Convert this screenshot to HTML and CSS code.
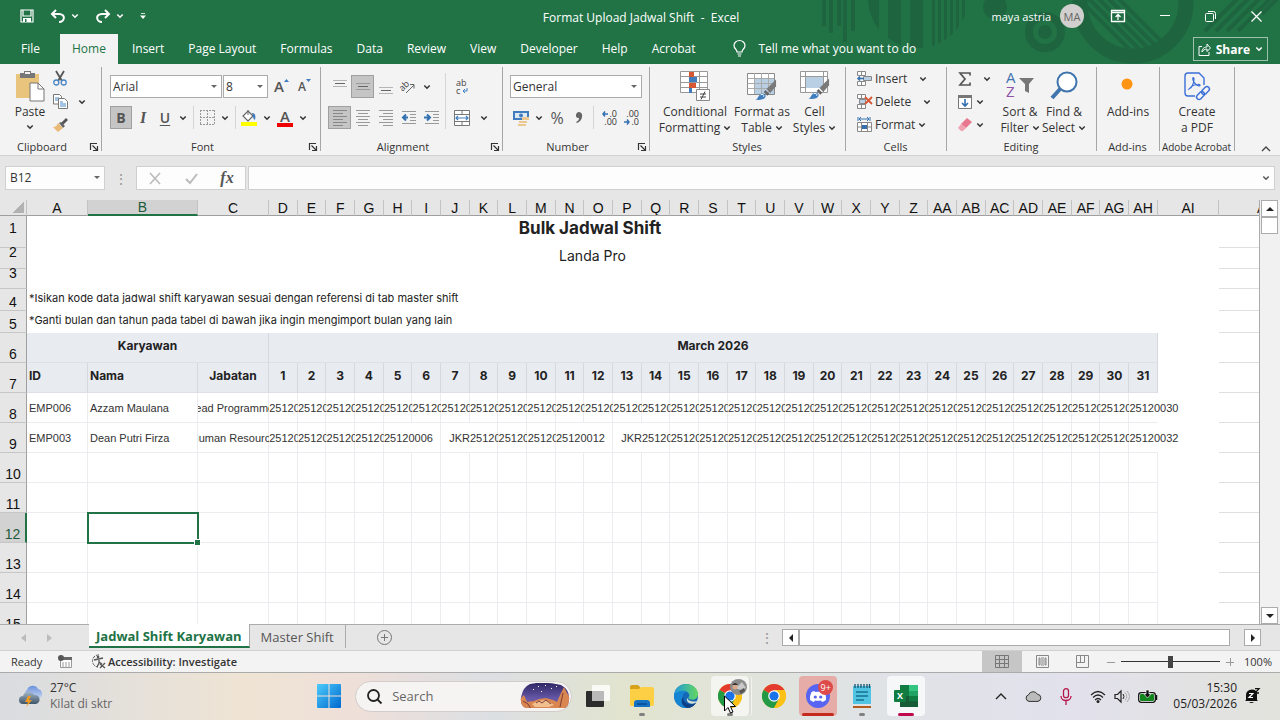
FILE: index.html
```html
<!DOCTYPE html>
<html lang="id">
<head>
    <meta charset="UTF-8">
    <meta name="viewport" content="width=device-width, initial-scale=1.0">
    <title>Format Upload Jadwal Shift - Excel</title>
    <link rel="stylesheet" href="styles.css">
</head>
<body>
    <!-- shared icons -->
    <svg class="defs" aria-hidden="true">
        <symbol id="chev" viewBox="0 0 8 8"><path d="M1.3 2.5 4 5.2 6.7 2.5" fill="none" stroke="currentColor" stroke-width="1.5"/></symbol>
        <symbol id="launch" viewBox="0 0 10 10"><path d="M1.5 8V1.5H8M3.5 3.5 8 8M8.5 4v4.5H4" fill="none" stroke="#333" stroke-width="1.2"/></symbol>
        <symbol id="brush" viewBox="0 0 24 24"><path d="M23 1v7l-6 7-4-4z" fill="#7a7a7a"/><path d="m12 12 4 4-2 2-4-4z" fill="#666"/><path d="M1 22c3 0 3-3 5-5 3-3 7 0 6 2-1 3-6 4-11 3z" fill="#3f7dbf"/><path d="M7 17c2-1 4 0 3 2" fill="none" stroke="#fff"/></symbol>
        <symbol id="chrome" viewBox="0 0 24 24">
            <circle cx="12" cy="12" r="12" fill="#fbc116"/>
            <path d="M12 12 1.6 6A12 12 0 0 1 22.4 6z" fill="#e33b2e"/>
            <path d="M1.6 6A12 12 0 0 0 12 24l5-9-5-3z" fill="#229a45"/>
            <path d="M12 24a12 12 0 0 0 10.4-18H12l5 9z" fill="#fbc116"/>
            <circle cx="12" cy="12" r="5.8" fill="#fff"/><circle cx="12" cy="12" r="4.6" fill="#1a73e8"/>
        </symbol>
    </svg>

    <header class="app-header">
        <svg class="pattern" width="460" height="64" viewBox="820 0 460 64" aria-hidden="true">
            <defs>
                <clipPath id="disc"><circle cx="918" cy="-2" r="50"/></clipPath>
                <clipPath id="inner"><circle cx="1133" cy="3" r="46"/></clipPath>
            </defs>
            <path d="M822 0h4v26h-4zM829 0h4v33h-4zM837 0h4v26h-4zM843 0h4v42h-4zM851 0h4v31h-4z"/>
            <path clip-path="url(#disc)" d="M868 0h11v64h-11zM888 0h13v64h-13zM910 0h13v64h-13zM932 0h3v64h-3zM938 0h3v64h-3zM944 0h3v64h-3zM950 0h3v64h-3zM956 0h3v64h-3zM962 0h3v64h-3z"/>
            <circle cx="995" cy="7" r="12"/>
            <circle cx="1045" cy="32" r="16" class="ring"/><circle cx="1045" cy="32" r="7"/>
            <circle cx="1133" cy="3" r="53" class="ring wide"/>
            <path clip-path="url(#inner)" class="lines" d="m1080-10 70 70M1090-10l70 70M1100-10l70 70M1110-10l70 70M1070-10l70 70"/>
            <path class="lines" d="m1205 31 33-33M1216 31l33-33M1227 31l33-33M1238 31l33-33M1262 14l20-20"/>
        </svg>
        <div class="title-row">
            <div class="quick">
                <button class="plain" aria-label="Save"><svg width="14" height="14" viewBox="0 0 14 14"><path d="M1 1h12v12H1zM3 1v6h8V1" fill="none" stroke="#fff" stroke-width="1.200"/><path d="M3 9h8v4H3z" fill="#fff"/><path d="M5 10h1.500v3H5z" fill="#217346"/></svg></button>
                <button class="plain" aria-label="Undo"><svg width="16" height="14" viewBox="0 0 16 14"><path d="M6 1 2 5l4 4M2 5h7c7 0 6 8 0 8" fill="none" stroke="#fff" stroke-width="2"/></svg><svg class="chev"><use href="#chev"/></svg></button>
                <button class="plain" aria-label="Redo"><svg width="16" height="14" viewBox="0 0 16 14"><path d="m10 1 4 4-4 4M14 5H7C0 5 1 13 7 13" fill="none" stroke="#fff" stroke-width="2"/></svg><svg class="chev"><use href="#chev"/></svg></button>
                <button class="plain" aria-label="Customize"><svg width="6" height="8" viewBox="0 0 6 8"><path d="M1 1.500h4" stroke="#cfe0d6"/><path d="M0 3.500h6L3 7z" fill="#fff"/></svg></button>
            </div>
            <div class="doc-title">Format Upload Jadwal Shift&nbsp; -&nbsp; Excel</div>
            <div class="window-tools">
                <span class="user">maya astria</span>
                <span class="avatar">MA</span>
                <button class="plain" aria-label="Ribbon display"><svg width="14" height="12" viewBox="0 0 14 12"><path d="M.5.500h13v11H.5zM.5 2.500h13M7 10V4.500M4.500 7 7 4.500 9.500 7" fill="none" stroke="#fff" stroke-width="1.300"/></svg></button>
                <button class="plain" aria-label="Minimize"><svg width="10" height="10" viewBox="0 0 10 10"><path d="M0 4.500h10" stroke="#fff"/></svg></button>
                <button class="plain" aria-label="Restore"><svg width="11" height="11" viewBox="0 0 11 11"><rect x=".5" y="2.500" width="8" height="8" rx="1" fill="none" stroke="#fff"/><path d="M3 .5h5.500a2 2 0 0 1 2 2V8" fill="none" stroke="#fff"/></svg></button>
                <button class="plain" aria-label="Close"><svg width="11" height="11" viewBox="0 0 11 11"><path d="m.5.500 10 10m0-10-10 10" stroke="#fff" stroke-width="1.300"/></svg></button>
            </div>
        </div>
        <nav class="tabs">
            <button>File</button>
            <button class="active">Home</button>
            <button>Insert</button>
            <button>Page Layout</button>
            <button>Formulas</button>
            <button>Data</button>
            <button>Review</button>
            <button>View</button>
            <button>Developer</button>
            <button>Help</button>
            <button>Acrobat</button>
            <button class="tell-me"><svg width="13" height="17" viewBox="0 0 13 17"><path d="M4 12c0-3-3-3-3-6.500a5.500 5 0 0 1 11 0C12 9 9 9 9 12zM4.500 14h4M5 16h3" fill="none" stroke="#fff" stroke-width="1.200"/></svg>Tell me what you want to do</button>
            <button class="share"><svg width="13" height="13" viewBox="0 0 13 13"><path d="M4 3.500H1v9h10V9M4 9c0-4 3-5 5-5V1l3.500 4L9 8.500V6C7 6 5 7 4 9z" fill="none" stroke="#fff"/></svg>Share<svg class="chev"><use href="#chev"/></svg></button>
        </nav>
    </header>

    <section class="ribbon">
        <div class="group clipboard">
            <div class="group-body">
                <button class="big"><svg width="30" height="32" viewBox="0 0 30 32"><path d="M1 4h23v24H1z" fill="#e9c47c"/><path d="M5 3h4V1h7v2h4v5H5z" fill="#777"/><path d="M10 2h5v2h-5z" fill="#f3f3f3"/><path d="M15 13h8l6 6v12H15z" fill="#fff" stroke="#777"/><path d="M23 13v6h6" fill="none" stroke="#777"/></svg>Paste<svg class="chev"><use href="#chev"/></svg></button>
                <div class="stack">
                    <button aria-label="Cut"><svg width="14" height="15" viewBox="0 0 14 15"><path d="m3 0 6 10M11 0 5 10" stroke="#555" stroke-width="1.800"/><circle cx="3.300" cy="11.500" r="2.500" fill="none" stroke="#4a86c5" stroke-width="1.300"/><circle cx="10.700" cy="11.500" r="2.500" fill="none" stroke="#4a86c5" stroke-width="1.300"/></svg></button>
                    <button aria-label="Copy"><svg width="15" height="15" viewBox="0 0 15 15"><path d="M.5.500h6l2 2V10h-8z" fill="#fff" stroke="#777"/><path d="M2 4h4M2 6h4" stroke="#4a86c5"/><path d="M5.500 4.500h6l3 3v7h-9z" fill="#fff" stroke="#777"/><path d="M7 8h3M7 10h6M7 12h6" stroke="#4a86c5"/></svg><svg class="chev far"><use href="#chev"/></svg></button>
                    <button aria-label="Format Painter"><svg width="15" height="14" viewBox="0 0 15 14"><path d="m8 5 5-5 2 2-5 5z" fill="#555"/><path d="m6 5 4 5 2-2-4-4z" fill="#666"/><path d="m5 5 5 5-5 4-5-5c2 0 4-1 5-4z" fill="#e9b978"/></svg></button>
                </div>
            </div>
            <div class="group-label">Clipboard</div>
            <button class="launcher" aria-label="Clipboard settings"><svg width="10" height="10"><use href="#launch"/></svg></button>
        </div>

        <div class="group font">
            <div class="rows">
                <div class="row">
                    <span class="combo name"><select aria-label="Font"><option>Arial</option></select></span>
                    <span class="combo size"><select aria-label="Font size"><option>8</option></select></span>
                    <button class="tool grow" aria-label="Increase font size">A<svg width="5" height="3" viewBox="0 0 5 3"><path d="M0 3 2.500 0 5 3z" fill="#3f7dbf"/></svg></button>
                    <button class="tool grow small" aria-label="Decrease font size">A<svg width="5" height="3" viewBox="0 0 5 3"><path d="M0 0h5L2.500 3z" fill="#3f7dbf"/></svg></button>
                </div>
                <div class="row">
                    <button class="tool bold on">B</button>
                    <button class="tool italic">I</button>
                    <button class="tool underline">U</button>
                    <button class="drop" aria-label="Underline style"><svg class="chev"><use href="#chev"/></svg></button>
                    <i class="sep"></i>
                    <button class="tool" aria-label="Borders"><svg width="15" height="15" viewBox="0 0 15 15"><path d="M.5 0v15M7.500 0v15M14.500 0v15M0 .5h15M0 7.500h15M0 14.500h15" stroke="#999" stroke-dasharray="2 1"/></svg></button>
                    <button class="drop" aria-label="Border style"><svg class="chev"><use href="#chev"/></svg></button>
                    <i class="sep"></i>
                    <button class="tool" aria-label="Fill color"><svg width="16" height="17" viewBox="0 0 16 17"><path d="m7 2 5 5-5 5-5-5z" fill="#fff" stroke="#666" stroke-width="1.200"/><path d="M7 6V1" stroke="#666"/><path d="M11 4c3 0 4 2 3 7-2-1-2-3-2-4z" fill="#3f7dbf"/><path d="M0 13h16v4H0z" fill="#ff0"/></svg></button>
                    <button class="drop" aria-label="Fill color list"><svg class="chev"><use href="#chev"/></svg></button>
                    <button class="tool font-color">A</button>
                    <button class="drop" aria-label="Font color list"><svg class="chev"><use href="#chev"/></svg></button>
                </div>
            </div>
            <div class="group-label">Font</div>
            <button class="launcher" aria-label="Font settings"><svg width="10" height="10"><use href="#launch"/></svg></button>
        </div>

        <div class="group alignment">
            <div class="rows">
                <div class="row">
                    <button class="tool" aria-label="Top align"><svg width="14" height="16" viewBox="0 0 14 16"><path d="M0 1.500h14M0 7.500h14" stroke="#b5b5b5"/><path d="M2 4.500h10" stroke="#666"/></svg></button>
                    <button class="tool on" aria-label="Middle align"><svg width="14" height="16" viewBox="0 0 14 16"><path d="M0 4.500h14M0 10.500h14" stroke="#999"/><path d="M2 7.500h10" stroke="#666"/></svg></button>
                    <button class="tool" aria-label="Bottom align"><svg width="14" height="16" viewBox="0 0 14 16"><path d="M0 8.500h14M0 14.500h14" stroke="#b5b5b5"/><path d="M2 11.500h10" stroke="#666"/></svg></button>
                    <button class="tool" aria-label="Orientation"><svg width="15" height="15" viewBox="0 0 15 15"><text x="0" y="11" transform="rotate(-45 3 10)" class="icon-text">ab</text><path d="m5 14 8-8M9 5.500h4v4" fill="none" stroke="#666"/></svg></button>
                    <button class="drop" aria-label="Orientation list"><svg class="chev"><use href="#chev"/></svg></button>
                </div>
                <div class="row">
                    <button class="tool on" aria-label="Align left"><svg width="14" height="16" viewBox="0 0 14 16"><path d="M0 .5h14M0 3.500h10M0 6.500h14M0 9.500h10M0 12.500h14M0 15.500h10" stroke="#888"/></svg></button>
                    <button class="tool" aria-label="Center"><svg width="14" height="16" viewBox="0 0 14 16"><path d="M0 .5h14M2 3.500h10M0 6.500h14M2 9.500h10M0 12.500h14M2 15.500h10" stroke="#999"/></svg></button>
                    <button class="tool" aria-label="Align right"><svg width="14" height="16" viewBox="0 0 14 16"><path d="M0 .5h14M4 3.500h10M0 6.500h14M4 9.500h10M0 12.500h14M4 15.500h10" stroke="#999"/></svg></button>
                    <button class="tool" aria-label="Decrease indent"><svg width="16" height="16" viewBox="0 0 16 16"><path d="M1 1.500h14M9 4.500h6M9 7.500h6M9 10.500h6M1 13.500h14" stroke="#999"/><path d="M7 7.500H2m3-3-3 3 3 3" fill="none" stroke="#3470b0" stroke-width="2"/></svg></button>
                    <button class="tool" aria-label="Increase indent"><svg width="16" height="16" viewBox="0 0 16 16"><path d="M1 1.500h14M9 4.500h6M9 7.500h6M9 10.500h6M1 13.500h14" stroke="#999"/><path d="M0 7.500h5m-2-3 3 3-3 3" fill="none" stroke="#3470b0" stroke-width="2"/></svg></button>
                </div>
            </div>
            <i class="sep tall"></i>
            <div class="rows side">
                <div class="row"><button class="tool" aria-label="Wrap text"><svg width="14" height="16" viewBox="0 0 14 16"><text x="1" y="7" class="icon-text">ab</text><text x="1" y="15" class="icon-text">c</text><path d="M12 9v3H8m2-2-2 2 2 2" fill="none" stroke="#3f7dbf"/></svg></button></div>
                <div class="row">
                    <button class="tool" aria-label="Merge"><svg width="16" height="16" viewBox="0 0 16 16"><path d="M.5.500h15v15H.5zM.5 4.500h15M.5 11.500h15M8 0v4M8 12v4" fill="#fff" stroke="#777"/><path d="M2 8h12M4 6 2 8l2 2M12 6l2 2-2 2" fill="none" stroke="#3f7dbf" stroke-width="1.200"/></svg></button>
                    <button class="drop" aria-label="Merge options"><svg class="chev"><use href="#chev"/></svg></button>
                </div>
            </div>
            <div class="group-label">Alignment</div>
            <button class="launcher" aria-label="Alignment settings"><svg width="10" height="10"><use href="#launch"/></svg></button>
        </div>

        <div class="group number">
            <div class="rows">
                <div class="row"><span class="combo format"><select aria-label="Number format"><option>General</option></select></span></div>
                <div class="row">
                    <button class="tool" aria-label="Currency"><svg width="16" height="16" viewBox="0 0 16 16"><path d="M0 1h16v9H0z" fill="#3f7dbf"/><path d="M2 3h12v5H2z" fill="#dfe9f4"/><circle cx="8" cy="5.500" r="2" fill="#3f7dbf"/><path d="M9 7h7v3H9zM6 11h8v2H6zM5 14h8v2H5z" fill="#edc88e"/></svg></button>
                    <button class="drop" aria-label="Currency list"><svg class="chev"><use href="#chev"/></svg></button>
                    <button class="tool percent">%</button>
                    <button class="tool comma" aria-label="Comma style"><svg width="8" height="12" viewBox="0 0 8 12"><path d="M4 0c5 0 4 9-2 11l-1-1c2-1 3-2 3-4C0 7 0 0 4 0z" fill="#666"/></svg></button>
                    <i class="sep"></i>
                    <button class="tool decimals" aria-label="Increase decimal"><span><svg width="6" height="6" viewBox="0 0 6 6"><path d="M6 3H1m2-2.500L1 3l2 2.500" fill="none" stroke="#3470b0" stroke-width="1.500"/></svg>.0</span><span>.00</span></button>
                    <button class="tool decimals" aria-label="Decrease decimal"><span>.00</span><span><svg width="6" height="6" viewBox="0 0 6 6"><path d="M0 3h5M3 .5 5 3 3 5.500" fill="none" stroke="#3470b0" stroke-width="1.500"/></svg>.0</span></button>
                </div>
            </div>
            <div class="group-label">Number</div>
            <button class="launcher" aria-label="Number settings"><svg width="10" height="10"><use href="#launch"/></svg></button>
        </div>

        <div class="group styles">
            <div class="group-body">
                <button class="big conditional"><svg width="30" height="32" viewBox="0 0 30 32"><path d="M1 2h26v21H1z" fill="#fff"/><path d="M.5 1.500h27v21H.5zM.5 6.500h27M.5 12.500h27M.5 17.500h27M9.500 1v22M19.500 1v22" fill="none" stroke="#999"/><path d="M9 2h5v5H9zM9 13h7v5H9z" fill="#d65532"/><path d="M9 7h8v5H9zM9 18h3v5H9z" fill="#3f7dbf"/><path d="M16.500 19.500h13v11h-13z" fill="#fff" stroke="#888"/><path d="M20 24h6M20 27h6M25 21.500l-4 8" stroke="#444"/></svg><span>Conditional</span><span>Formatting <svg class="chev"><use href="#chev"/></svg></span></button>
                <button class="big format-table"><svg width="30" height="32" viewBox="0 0 30 32"><path d="M.5 3.500h27v21H.5z" fill="#fff" stroke="#888"/><path d="M7 9h20v15H7z" fill="#b9cfe3"/><path d="M.5 8.500h27M.5 13.500h27M.5 18.500h27M7.500 3v21M14.500 3v21M21.500 3v21" stroke="#aaa"/><use href="#brush" x="7" y="8" width="23" height="24"/></svg><span>Format as</span><span>Table <svg class="chev"><use href="#chev"/></svg></span></button>
                <button class="big cell-styles"><svg width="30" height="32" viewBox="0 0 30 32"><path d="M.5 1.500h27v21H.5zM.5 6.500h27M.5 17.500h27M5.500 1v22M23.500 1v22" fill="#fff" stroke="#999"/><path d="M6 7h17v11H6z" fill="#b9cfe3"/><use href="#brush" x="7" y="7" width="23" height="24"/></svg><span>Cell</span><span>Styles <svg class="chev"><use href="#chev"/></svg></span></button>
            </div>
            <div class="group-label">Styles</div>
        </div>

        <div class="group cells">
            <div class="stack">
                <button class="split"><svg width="15" height="15" viewBox="0 0 15 15"><path d="M.5.500h8v4h-8zM4.500 0v4M.5 10.500h8v4h-8zM4.500 10v5" fill="#fff" stroke="#888"/><path d="M6.500 5.500h8v4h-8z" fill="#b9cfe3" stroke="#888"/><path d="M7 7.500H1m2-2-2 2 2 2" fill="none" stroke="#3470b0" stroke-width="1.500"/></svg>Insert<svg class="chev"><use href="#chev"/></svg></button>
                <button class="split"><svg width="15" height="15" viewBox="0 0 15 15"><path d="M.5.500h8v4h-8zM4.500 0v4M.5 10.500h8v4h-8zM4.500 10v5" fill="#fff" stroke="#888"/><path d="M2.500 5.500h6v4h-6z" fill="#b9cfe3" stroke="#888"/><path d="m8 3 7 7m0-7-7 7" stroke="#d65532" stroke-width="1.800"/></svg>Delete<svg class="chev"><use href="#chev"/></svg></button>
                <button><svg width="15" height="15" viewBox="0 0 15 15"><path d="M1 0v4M13 0v4M2 2h10M4 0 2 2l2 2M10 0l2 2-2 2" fill="none" stroke="#3470b0"/><path d="M.5 5.500h14v9H.5zM4.500 5v10M10.500 5v10M0 10h15" fill="#fff" stroke="#888"/><path d="M5 8h5v4H5z" fill="#3470b0"/></svg>Format<svg class="chev"><use href="#chev"/></svg></button>
            </div>
            <div class="group-label">Cells</div>
        </div>

        <div class="group editing">
            <div class="stack">
                <button class="split" aria-label="AutoSum"><svg width="16" height="14" viewBox="0 0 16 14"><path d="M13 3.500V1H3l5 6-5 6h10v-2.500" fill="none" stroke="#555" stroke-width="1.700"/></svg><svg class="chev"><use href="#chev"/></svg></button>
                <button aria-label="Fill"><svg width="16" height="16" viewBox="0 0 16 16"><path d="M1.500 1.500h13v13h-13z" fill="#fff" stroke="#777"/><path d="M1 1h14v3H1z" fill="#777"/><path d="M8 5v7M5 9l3 3 3-3" fill="none" stroke="#3470b0" stroke-width="1.600"/></svg><svg class="chev"><use href="#chev"/></svg></button>
                <button aria-label="Clear"><svg width="16" height="14" viewBox="0 0 16 14"><path d="m10 0 5 4-6 6-5-4z" fill="#e8788e"/><path d="m4 6 5 4-3 3H4L1 10z" fill="#efa3b1"/></svg><svg class="chev"><use href="#chev"/></svg></button>
            </div>
            <button class="big find"><svg width="30" height="32" viewBox="0 0 30 32"><text x="1" y="13" class="az a">A</text><text x="1" y="27" class="az z">Z</text><path d="M14 8h15l-5 6v9l-4-2v-7z" fill="#777"/></svg><span>Sort &amp;</span><span>Filter <svg class="chev"><use href="#chev"/></svg></span></button>
            <button class="big find"><svg width="28" height="32" viewBox="0 0 28 32"><path d="m2 28 9-10" stroke="#3f74ad" stroke-width="4"/><circle cx="17" cy="12" r="9.500" fill="#fff" stroke="#3f74ad" stroke-width="2"/></svg><span>Find &amp;</span><span>Select <svg class="chev"><use href="#chev"/></svg></span></button>
            <div class="group-label">Editing</div>
        </div>

        <div class="group addins">
            <button class="big"><svg width="30" height="32" viewBox="0 0 30 32"><circle cx="14" cy="14" r="5.500" fill="#ff9412"/></svg><span>Add-ins</span></button>
            <div class="group-label">Add-ins</div>
        </div>

        <div class="group acrobat">
            <button class="big"><svg width="28" height="32" viewBox="0 0 28 32"><path d="M12 26H5a3 3 0 0 1-3-3V6a3 3 0 0 1 3-3h11l5 5v7" fill="none" stroke="#3b6fd8" stroke-width="1.400"/><path d="M6 19c3-1 5-6 5-10 0-2-2-2-1 1 1 3 3 5 6 6 2 0 1-2-1-1.500-4 0-7 2-9 4.500z" fill="none" stroke="#3b6fd8" stroke-width="1.200"/><g fill="none" stroke="#3b6fd8" stroke-width="1.400"><rect x="13" y="23" width="9" height="5" rx="2.500" transform="rotate(-45 17.500 25.500)"/><rect x="18" y="18" width="9" height="5" rx="2.500" transform="rotate(-45 22.500 20.500)"/></g></svg><span>Create</span><span>a PDF</span></button>
            <div class="group-label">Adobe Acrobat</div>
        </div>
        <button class="collapse" aria-label="Collapse ribbon"><svg width="10" height="6" viewBox="0 0 10 6"><path d="m1 5 4-4 4 4" fill="none" stroke="#444" stroke-width="1.400"/></svg></button>
    </section>

    <div class="formula-bar">
        <span class="combo name-box"><input type="text" value="B12" aria-label="Name Box"></span>
        <span class="dots">⋮</span>
        <div class="formula-tools">
            <button aria-label="Cancel"><svg width="12" height="11" viewBox="0 0 12 11"><path d="m1 0 10 11M11 0 1 11" stroke="#bbb" stroke-width="1.600"/></svg></button>
            <button aria-label="Enter"><svg width="13" height="11" viewBox="0 0 13 11"><path d="m1 6 4 4 7-9" fill="none" stroke="#bbb" stroke-width="2"/></svg></button>
            <button class="fx">fx</button>
        </div>
        <span class="formula-input"><input type="text" aria-label="Formula Bar"><svg class="chev"><use href="#chev"/></svg></span>
    </div>

    <main class="workspace">
        <div class="sheet">
            <table class="grid">
                <colgroup id="cols"></colgroup>
                <thead><tr id="letters"></tr></thead>
                <tbody id="rows"></tbody>
            </table>
        </div>
        <div class="v-scroll">
            <button aria-label="Scroll up"><svg width="8" height="4" viewBox="0 0 8 4"><path d="m0 4 4-4 4 4z" fill="#222"/></svg></button>
            <div class="thumb"></div>
            <button aria-label="Scroll down"><svg width="8" height="4" viewBox="0 0 8 4"><path d="m0 0 4 4 4-4z" fill="#222"/></svg></button>
        </div>
    </main>

    <div class="sheet-tabs">
        <div class="sheet-nav">
            <button aria-label="Previous sheet"><svg width="5" height="8" viewBox="0 0 5 8"><path d="M5 0v8L0 4z" fill="#bbb"/></svg></button>
            <button aria-label="Next sheet"><svg width="5" height="8" viewBox="0 0 5 8"><path d="M0 0v8l5-4z" fill="#bbb"/></svg></button>
        </div>
        <button class="sheet-tab active">Jadwal Shift Karyawan</button>
        <button class="sheet-tab">Master Shift</button>
        <button class="add-sheet" aria-label="New sheet"><svg width="15" height="15" viewBox="0 0 15 15"><path d="M7.500 4v7M4 7.500h7" stroke="#777"/><circle cx="7.500" cy="7.500" r="7" fill="none" stroke="#777"/></svg></button>
        <div class="h-scroll">
            <span class="dots">⋮</span>
            <button aria-label="Scroll left"><svg width="4" height="8" viewBox="0 0 4 8"><path d="M4 0v8L0 4z" fill="#222"/></svg></button>
            <div class="thumb"></div>
            <button aria-label="Scroll right"><svg width="4" height="8" viewBox="0 0 4 8"><path d="M0 0v8l4-4z" fill="#222"/></svg></button>
        </div>
    </div>

    <footer class="status-bar">
        <span class="ready">Ready</span>
        <svg width="14" height="14" viewBox="0 0 14 14"><path d="M2.500 4.500h11v8h-11zM5 7v5M8 7v5M11 7v5" fill="#fff" stroke="#999"/><path d="M6 2h8v3H4z" fill="#666"/><circle cx="3" cy="3" r="3" fill="#555"/></svg>
        <button class="accessibility"><svg width="15" height="15" viewBox="0 0 15 15"><path d="M8 1a6 6 0 1 0-1 12" fill="none" stroke="#555" stroke-dasharray="3 1"/><path d="m3 6 9-2M8 5v4l-2 4M8 8l3 2m-2 0 5 4m0-5-5 5" fill="none" stroke="#555" stroke-width="1.300"/><circle cx="7" cy="3" r="1.300" fill="#555"/></svg>Accessibility: Investigate</button>
        <div class="views">
            <button class="on" aria-label="Normal view"><svg width="14" height="13" viewBox="0 0 14 13"><path d="M.5.500h13v12H.5zM0 4.500h14M0 8.500h14M4.500 0v13M9.500 0v13" fill="none" stroke="#777"/></svg></button>
            <button aria-label="Page layout view"><svg width="13" height="13" viewBox="0 0 13 13"><path d="M.5.500h12v12H.5z" fill="none" stroke="#888"/><path d="M3 3h1v7H3zM9 3h1v7H9z" fill="none" stroke="#888"/><path d="M5 2h3v9H5z" fill="#bbb"/></svg></button>
            <button aria-label="Page break view"><svg width="13" height="13" viewBox="0 0 13 13"><path d="M.5.500h12v12H.5zM4.500 0v7.500M0 7.500h8.500V0" fill="none" stroke="#888"/></svg></button>
        </div>
        <button class="zoom-step" aria-label="Zoom out"><svg width="8" height="8" viewBox="0 0 8 8"><path d="M0 4.500h8" stroke="#999"/></svg></button>
        <input class="zoom" type="range" min="10" max="190" value="100" aria-label="Zoom">
        <button class="zoom-step" aria-label="Zoom in"><svg width="8" height="8" viewBox="0 0 8 8"><path d="M0 4.500h8M4.500 0v8" stroke="#999"/></svg></button>
        <span class="zoom-value">100%</span>
    </footer>

    <div class="taskbar">
        <button class="weather">
            <svg width="26" height="24" viewBox="0 0 26 24"><defs><linearGradient id="cl" x2="0" y2="1"><stop stop-color="#6b92dc"/><stop offset="1" stop-color="#c3d3f3"/></linearGradient><linearGradient id="cd" x2="0" y2="1"><stop stop-color="#a3b6c6"/><stop offset="1" stop-color="#3f5569"/></linearGradient></defs><path d="M9 13a4 4 0 0 1 0-7 6 6 0 0 1 11-1 5 5 0 0 1 2 9z" fill="url(#cl)"/><path d="M5 20a4 4 0 0 1 0-8 6 6 0 0 1 11-1 4.500 4.500 0 0 1 2 9z" fill="url(#cd)"/><path d="m10 12-3 6h3l-2 5 6-7h-3l2-4z" fill="#f39a1f"/></svg>
            <span><span class="temp">27°C</span><span class="sky">Kilat di sktr</span></span>
        </button>
        <div class="apps">
            <button class="app" aria-label="Start"><svg width="24" height="24" viewBox="0 0 24 24"><defs><linearGradient id="win" x2="1" y2="1"><stop stop-color="#4ccbfb"/><stop offset="1" stop-color="#0068cf"/></linearGradient></defs><path d="M0 1q0-1 1-1h10.500v11.500H0zM12.500 0H23q1 0 1 1v10.500H12.500zM0 12.500h11.500V24H1q-1 0-1-1zM12.500 12.500H24V23q0 1-1 1H12.500z" fill="url(#win)"/></svg></button>
            <label class="search">
                <svg width="15" height="15" viewBox="0 0 15 15"><circle cx="6.500" cy="6.500" r="5.500" fill="none" stroke="#222" stroke-width="1.800"/><path d="m10.500 10.500 4 4" stroke="#222" stroke-width="1.800"/></svg>
                <input type="text" placeholder="Search">
                <svg width="50" height="26" viewBox="0 0 50 26"><defs><linearGradient id="sky" x2="0" y2="1"><stop stop-color="#302765"/><stop offset=".6" stop-color="#6658a8"/><stop offset="1" stop-color="#a4697c"/></linearGradient><clipPath id="scene"><path d="M10 1q15-3 31 1 9 5 8 15-1 8-5 8H6q-6-2-5-11Q3 4 10 1z"/></clipPath></defs><g clip-path="url(#scene)"><path d="M0 0h50v26H0z" fill="url(#sky)"/><path d="M0 16l4-4 3 7 7-1 5-2 7-1 7 2 4 2 3-7 4-8 3 6 3 4v12H0z" fill="#d98650"/><path d="m12 21 6-3 8-1 8 5-5 2H15z" fill="#f2c08e"/><path d="m16 20 3-2 3 2 4-3 5 4M3 18l5 3 3 5M43 10l-3 14" fill="none" stroke="#7c3f3a"/><path d="M13 6h1v1h-1zM18 3h1v1h-1zM25 2h1v1h-1zM31 5h1v1h-1zM36 3h1v1h-1zM21 8h1v1h-1z" fill="#fff"/></g></svg>
            </label>
            <button class="app" aria-label="Task view"><svg width="24" height="24" viewBox="0 0 24 24"><rect x="0" y="7" width="18" height="16" rx="1" fill="#2c2c2c"/><rect x="6" y="1" width="18" height="16" rx="1" fill="#fff" opacity=".8"/><path d="M6 7h12v10H6z" fill="#b9b9b9"/></svg></button>
            <button class="app running" aria-label="File Explorer"><svg width="24" height="22" viewBox="0 0 24 22"><path d="M0 2q0-2 2-2h6l2 2v4H0z" fill="#d9a21b"/><path d="M0 4h9l2-2h11q2 0 2 2v15q0 2-2 2H0z" fill="#fccf45"/><path d="M4 22v-4q0-3 3-3h10q3 0 3 3v4z" fill="#1673c4"/><path d="M7 19h10" stroke="#0c4a8f" stroke-width="1.500"/></svg></button>
            <button class="app" aria-label="Edge"><svg width="24" height="24" viewBox="0 0 24 24"><defs><linearGradient id="eg" x2="1"><stop stop-color="#2098df"/><stop offset="1" stop-color="#64d85c"/></linearGradient></defs><circle cx="12" cy="12" r="12" fill="#1466b7"/><path d="M0 11C1 4 6 0 12 0c7 0 12 5 12 10 0 5-5 7-9 5-2-1 1-2 0-5-2-4-10-4-15 1z" fill="url(#eg)"/><path d="M0 11c5-5 11-5 13-3-3 0-5 3-4 7 1 5 6 7 13 4-3 4-7 5-11 5C4 23 0 18 0 11z" fill="#1585d3"/><path d="M9 13c0 6 6 9 13 6-2 3-5 5-9 5-5-2-7-7-4-11z" fill="#0c3f83"/><path d="M13 14c2 4 7 4 10 3-1 2-2 2-2 2-5 2-9-1-8-5z" fill="#dde2d6"/></svg></button>
            <button class="app running open" aria-label="Chrome, profile">
                <svg width="24" height="24"><use href="#chrome"/></svg>
                <svg class="profile" width="17" height="16" viewBox="0 0 17 16"><ellipse cx="8.500" cy="8" rx="8.500" ry="8" fill="#8c8c8c"/><path d="M3 4l5 3 4-4 4 6-5 2-6-2z" fill="#c9c9c9"/><circle cx="5" cy="8" r="2.500" fill="#d9a98a"/><path d="M2 6q3-4 6 0z" fill="#333"/><path d="m9 12 5-3 1 3-4 3z" fill="#555"/></svg>
                <svg class="cursor" width="12" height="19" viewBox="0 0 12 19"><path d="M.5 1v15l3.500-3.500 2.500 5.500 2.500-1-2.500-5.500h5z" fill="#fff" stroke="#000"/></svg>
            </button>
            <button class="app" aria-label="Chrome"><svg width="24" height="24"><use href="#chrome"/></svg></button>
            <button class="app alert" aria-label="Discord">
                <svg width="24" height="24" viewBox="0 0 24 24"><circle cx="12" cy="12" r="12" fill="#5865f2"/><path d="M8.500 7q-2 .3-3 1Q3.500 12 4 16q2 1.600 4 2l1-1.500q3 .7 6 0L16 18q2-.4 4-2 .5-4-1.500-8-1-.7-3-1l-.6 1q-3-.5-5.800 0z" fill="#fff"/><circle cx="9.300" cy="13" r="1.600" fill="#5865f2"/><circle cx="14.700" cy="13" r="1.600" fill="#5865f2"/></svg>
                <span class="badge">9+</span>
            </button>
            <button class="app running" aria-label="Notepad"><svg width="20" height="24" viewBox="0 0 20 24"><path d="M1 2h18v18H1z" fill="#52c4e3"/><path d="M3 0v4M6 0v4M9 0v4M12 0v4M15 0v4M17.500 0v4" stroke="#15536b" stroke-width="1.300"/><path d="M4 8h12M4 12h12M4 16h8" stroke="#14718f" stroke-width="1.300"/><path d="M1 22h18v2H1z" fill="#b35a1d"/></svg></button>
            <button class="app current" aria-label="Excel"><svg width="24" height="22" viewBox="0 0 24 22"><path d="M6 0h17q1 0 1 1v20q0 1-1 1H6z" fill="#21a366"/><path d="M6 0h9v6H6zM6 6h9v5H6z" fill="#107c41"/><path d="M15 0h8q1 0 1 1v5h-9z" fill="#33c481"/><path d="M15 11h9v5h-9z" fill="#107c41"/><path d="M6 11h9v5H6zM6 16h18v6H6z" fill="#185c37"/><rect y="5" width="12" height="12" rx="1" fill="#107c41"/><text x="6" y="14" text-anchor="middle" class="x">X</text></svg></button>
        </div>
        <div class="tray">
            <button aria-label="Hidden icons"><svg width="12" height="8" viewBox="0 0 12 8"><path d="m1 7 5-5 5 5" fill="none" stroke="#222" stroke-width="1.400"/></svg></button>
            <button aria-label="OneDrive"><svg width="17" height="12" viewBox="0 0 17 12"><path d="M4 11.400a3.400 3.400 0 0 1-.5-6.600 5 5 0 0 1 9-.5 3.600 3.600 0 0 1 .5 7.100z" fill="#bbb" stroke="#333"/></svg></button>
            <button aria-label="Microphone"><svg width="12" height="17" viewBox="0 0 12 17"><rect x="3.500" y=".7" width="5" height="9" rx="2.500" fill="none" stroke="#b5174b" stroke-width="1.300"/><path d="M1 8c0 6 10 6 10 0M6 12.500V17" fill="none" stroke="#b5174b" stroke-width="1.300"/></svg></button>
            <div class="net">
                <svg width="16" height="13" viewBox="0 0 16 13"><path d="M1 5q7-7 14 0M3 7.500q5-5 10 0M5 10q3-3 6 0" fill="none" stroke="#222" stroke-width="1.200"/><circle cx="8" cy="11.500" r="1.500" fill="#222"/></svg>
                <svg width="16" height="13" viewBox="0 0 16 13"><path d="M1 4.500h2.500L7 1v11L3.500 8.500H1z" fill="none" stroke="#222" stroke-width="1.200"/><path d="M9 4q2 2.500 0 5" fill="none" stroke="#222"/><path d="M11 2.500q3.500 4 0 8M13 1q5 5.500 0 11" fill="none" stroke="#aaa"/></svg>
                <svg width="20" height="13" viewBox="0 0 20 13"><rect x=".7" y="2.700" width="16.600" height="9.600" rx="2.500" fill="#fff" stroke="#111" stroke-width="1.300"/><rect x="2" y="4" width="14" height="7" rx="1" fill="#12861c"/><path d="M18.500 5v5" stroke="#111" stroke-width="1.500"/><path d="M8 0h3v4h2L9.500 8 6 4h2z" fill="#111" stroke="#fff" stroke-width=".6"/></svg>
            </div>
            <div class="clock"><span>15:30</span><span>05/03/2026</span></div>
            <button aria-label="Notifications"><svg width="15" height="16" viewBox="0 0 15 16"><path d="M1 12V7q0-5 6-5.500 5 0 5 5V12l1 1H0zM4 14h5q-2.500 2-5 0z" fill="#111"/><path d="M4 5.500h4l-4 4h4" fill="none" stroke="#fff" stroke-width="1.200"/><path d="M10 .7h4L10 5h4" fill="none" stroke="#111" stroke-width="1.300"/></svg></button>
        </div>
    </div>

    <script src="script.js"></script>
</body>
</html>
```
FILE: styles.css
```css
* {
    box-sizing: border-box;
}

body {
    margin: 0;
    height: 100vh;
    display: flex;
    flex-direction: column;
    overflow: hidden;
    background: #e6e6e6;
    color: #333;
    font-family: "Open Sans", "Noto Sans", sans-serif;
    font-size: 12px;
}

button, input, select {
    font: inherit;
    color: inherit;
    margin: 0;
    padding: 0;
    border: none;
    background: none;
    border-radius: 0;
    outline: none;
}

svg {
    display: block;
    flex: none;
    overflow: visible;
}

.defs {
    position: absolute;
    width: 0;
    height: 0;
}

.chev {
    width: 8px;
    height: 8px;
}

/* title bar and ribbon tabs */
.app-header {
    position: relative;
    background: #217346;
    color: #fff;
}

.pattern {
    position: absolute;
    right: 0;
    top: 0;
    overflow: hidden;
    fill: #1e653f;
}

.pattern .ring {
    fill: none;
    stroke: #1e653f;
    stroke-width: 8;
}

.pattern .wide {
    stroke-width: 15;
}

.pattern .lines {
    fill: none;
    stroke: #1e653f;
    stroke-width: 4;
}

.title-row {
    position: relative;
    display: flex;
    align-items: center;
    height: 34px;
}

.quick, .window-tools {
    flex: 1;
    display: flex;
    align-items: center;
    padding-bottom: 2px;
}

.quick {
    gap: 16px;
    padding-left: 20px;
}

.quick .plain, .window-tools .plain {
    display: flex;
    align-items: center;
    gap: 5px;
}

.window-tools {
    justify-content: flex-end;
    padding-right: 18px;
}

.window-tools .plain {
    margin-left: 35px;
}

.user {
    font-size: 11px;
}

.avatar {
    display: flex;
    align-items: center;
    justify-content: center;
    width: 24px;
    height: 24px;
    margin-left: 9px;
    margin-right: -8px;
    border-radius: 50%;
    background: #d2d0ce;
    color: #666;
    font-size: 11px;
}

.tabs {
    position: relative;
    display: flex;
    height: 30px;
    padding-left: 9px;
}

.tabs button {
    padding: 0 12px;
    padding-bottom: 1px;
}

.tabs .active {
    margin: 0 2px 0 8px;
    background: #f3f3f3;
    color: #217346;
}

.tabs .tell-me, .tabs .share {
    display: flex;
    align-items: center;
}

.tabs .tell-me {
    gap: 12px;
    margin-left: 14px;
}

.tabs .share {
    gap: 5px;
    margin: 3px 12px 3px auto;
    padding: 0 4px;
    border: 1px solid #9fc2ae;
    font-weight: 700;
}

/* ribbon */
.ribbon {
    display: flex;
    height: 92px;
    background: #f3f3f3;
    border-bottom: 1px solid #d2d2d2;
    font-size: 12px;
}

.group {
    position: relative;
    display: flex;
    align-items: flex-start;
    flex: none;
    padding: 0 8px 24px;
}

.group::after {
    content: "";
    position: absolute;
    right: 0;
    top: 3px;
    bottom: 4px;
    width: 1px;
    background: #a6a6a6;
}

.clipboard { width: 102px; }
.font { width: 219px; }
.alignment { width: 182px; }
.number { width: 147px; }
.styles { width: 196px; }
.cells { width: 101px; }
.editing { width: 150px; }
.addins { width: 63px; }
.acrobat { width: 75px; }

.alignment, .number {
    padding-left: 7px;
}

.addins, .acrobat {
    padding-left: 0;
    padding-right: 0;
}

.group-label {
    position: absolute;
    left: 0;
    right: 0;
    bottom: 1px;
    padding-right: 18px;
    text-align: center;
    font-size: 11px;
    line-height: 14px;
    white-space: nowrap;
}

.styles .group-label, .cells .group-label, .editing .group-label,
.addins .group-label, .acrobat .group-label {
    padding-right: 2px;
}

.acrobat .group-label {
    font-size: 10px;
}

.launcher {
    position: absolute;
    right: 3px;
    bottom: 3px;
}

.group-body {
    display: flex;
}

.big {
    display: flex;
    flex-direction: column;
    align-items: center;
    padding-top: 6px;
    line-height: 16px;
    white-space: nowrap;
}

.big > svg:first-child {
    margin-bottom: 2px;
}

.big span {
    display: flex;
    align-items: center;
    gap: 3px;
}

.clipboard .big {
    width: 44px;
}

.clipboard .big .chev {
    margin-top: 3px;
}

.conditional { width: 74px; }
.format-table { width: 60px; }
.cell-styles { width: 45px; }
.find { width: 44px; }
.addins .big { width: 62px; }
.acrobat .big { width: 74px; }

.stack {
    display: flex;
    flex-direction: column;
    padding-top: 3px;
}

.stack button {
    display: flex;
    align-items: center;
    gap: 3px;
    height: 23px;
}

.clipboard .stack {
    padding-left: 1px;
}

.stack .far {
    margin-left: 7px;
}

.stack .split .chev {
    margin-left: 9px;
}

.cells .stack {
    padding-left: 3px;
}

.editing .stack {
    padding-left: 2px;
    width: 43px;
}

.editing .split .chev {
    margin-left: 7px;
}

.rows {
    display: flex;
    flex-direction: column;
    gap: 8px;
    padding-top: 11px;
}

.row {
    display: flex;
    align-items: center;
    height: 23px;
}

.combo {
    position: relative;
    display: block;
    height: 23px;
    background: #fff;
    border: 1px solid #ababab;
}

.combo::after {
    content: "";
    position: absolute;
    right: 4px;
    top: 9px;
    border: 3px solid transparent;
    border-top-color: #666;
}

.combo select, .combo input {
    appearance: none;
    display: block;
    width: 100%;
    height: 21px;
    line-height: 20px;
    padding-left: 2px;
}

.combo.name {
    width: 112px;
    margin-right: 1px;
}

.combo.size {
    width: 45px;
    margin-right: 2px;
}

.combo.format {
    width: 132px;
}

.tool {
    display: flex;
    align-items: center;
    justify-content: center;
    width: 22px;
    height: 23px;
    color: #555;
}

.alignment .tool {
    width: 23px;
}

.tool.on {
    background: #c5c5c5;
    border: 1px solid #a0a0a0;
}

.drop {
    display: flex;
    align-items: center;
    justify-content: center;
    width: 14px;
    height: 23px;
}

.sep {
    width: 1px;
    height: 23px;
    margin: 0 2px 0 3px;
    background: #d5d5d5;
}

.sep.tall {
    height: 56px;
    margin: 9px 4px 0 2px;
}

.side .drop {
    width: 22px;
}

.grow {
    align-items: flex-start;
    width: 23px;
    font-size: 15px;
    font-weight: 600;
    line-height: 23px;
}

.grow.small {
    font-size: 12px;
}

.grow svg {
    margin-top: 4px;
}

.bold {
    font-size: 14px;
    font-weight: 700;
}

.italic {
    font-family: "Liberation Serif", serif;
    font-size: 16px;
    font-style: italic;
    font-weight: 700;
}

.underline {
    font-size: 14px;
    font-weight: 600;
    text-decoration: underline;
    text-underline-offset: 2px;
}

.font-color {
    align-items: flex-start;
    background: linear-gradient(#e00, #e00) center bottom 2px / 16px 4px no-repeat;
    font-size: 15px;
    font-weight: 600;
    line-height: 20px;
}

.percent {
    font-size: 16px;
}

.decimals {
    flex-direction: column;
    align-items: flex-end;
    padding-right: 1px;
    font-size: 9px;
    line-height: 8px;
    color: #333;
}

.decimals span {
    display: flex;
    align-items: center;
    gap: 1px;
}

.icon-text {
    font-size: 9px;
    fill: #444;
}

.az {
    font-size: 15px;
}

.az.a { fill: #3f74ad; }
.az.z { fill: #8e52a8; }

.collapse {
    align-self: flex-end;
    margin: 0 9px 3px auto;
}

/* formula bar */
.formula-bar {
    display: flex;
    align-items: center;
    padding: 10px 5px;
}

.name-box, .formula-tools, .formula-input {
    height: 24px;
    background: #fdfdfd;
    border: 1px solid #d0d0d0;
}

.name-box {
    width: 100px;
}

.name-box input {
    padding-left: 4px;
}

.dots {
    width: 31px;
    color: #999;
    text-align: center;
    font-size: 14px;
}

.formula-tools {
    display: flex;
    width: 110px;
    margin-right: 2px;
}

.formula-tools button {
    flex: 1;
    display: flex;
    align-items: center;
    justify-content: center;
}

.formula-tools .fx {
    font-family: "Liberation Serif", serif;
    font-size: 16px;
    font-style: italic;
    font-weight: 700;
    color: #555;
}

.formula-input {
    flex: 1;
    display: flex;
    align-items: center;
    padding-right: 4px;
    color: #555;
}

.formula-input input {
    flex: 1;
}

/* worksheet */
.workspace {
    flex: 1;
    min-height: 0;
    display: flex;
}

.sheet {
    flex: 1;
    min-width: 0;
    overflow: hidden;
    background: linear-gradient(#e6e6e6 15px, #fff 15px);
    border-right: 1px solid #ababab;
}

.grid {
    width: 100%;
    table-layout: fixed;
    border-collapse: separate;
    border-spacing: 0;
    font-family: "Liberation Sans", sans-serif;
    font-size: 11px;
    line-height: 14px;
}

.grid th, .grid td {
    padding: 0;
    border: 0 solid #ececf0;
    font-weight: 400;
    white-space: nowrap;
}

.col-head { width: 27px; }
.col-a { width: 61px; }
.col-b { width: 110px; }
.col-c { width: 71px; }
.col-ai { width: 61px; }
.col-aj { width: 40px; }

.grid thead th {
    height: 16px;
    overflow: hidden;
    background: #e6e6e6;
    border-right: 1px solid #c3c3c3;
    border-bottom: 1px solid #9f9f9f;
    color: #111;
    font-size: 14px;
    line-height: 14px;
    vertical-align: bottom;
}

.grid thead .selected {
    background: #d2d2d2;
    border-bottom: 2px solid #217346;
    color: #1f5a3a;
}

.grid thead .corner {
    background: linear-gradient(135deg, transparent 50%, #b2b2b2 50%) right 2px bottom 2px / 11px 11px no-repeat #e6e6e6;
}

.grid thead th:last-child {
    padding-left: 38px;
    border-right: none;
    text-align: left;
}

.grid .num {
    background: #e6e6e6;
    border-right: 1px solid #9f9f9f;
    border-bottom: 1px solid #c6c6c6;
    color: #111;
    font-size: 14px;
    line-height: 16px;
    vertical-align: bottom;
}

.grid .row-1 .num {
    vertical-align: middle;
    padding-bottom: 7px;
}

.grid .row-2 .num, .grid .row-3 .num {
    vertical-align: top;
    line-height: 9px;
}

.grid .row-12 .num {
    background: #d2d2d2;
    border-right: 2px solid #217346;
    color: #1f5a3a;
}

.row-1 { height: 32px; }
.row-2 { height: 21px; }
.row-3 { height: 20px; }
.row-4, .row-5 { height: 22px; }
.line { height: 30px; }

.grid .edge {
    border-bottom: 1px solid #dfdfdf;
}

.grid .title, .grid .subtitle, .grid .note, .grid .head {
    font-family: "Inter", sans-serif;
    color: #222;
}

.grid .title {
    padding-bottom: 9px;
    padding-right: 5px;
    font-size: 17px;
    font-weight: 700;
    line-height: 20px;
    text-align: center;
}

.grid .subtitle {
    padding-bottom: 6px;
    font-size: 14px;
    text-align: center;
}

.grid .note {
    padding-left: 2px;
    padding-bottom: 5px;
    font-size: 11px;
}

.grid .head {
    padding-bottom: 4px;
    background: #e8ebf0;
    border-right: 1px solid #d5d9df;
    border-bottom: 1px solid #dde1e7;
    font-size: 12px;
    font-weight: 700;
    text-align: center;
}

.grid .left {
    padding-left: 2px;
    text-align: left;
}

.grid .cell {
    border-right-width: 1px;
    border-bottom-width: 1px;
    position: relative;
}

.grid .text {
    padding-left: 2px;
}

.grid .joined {
    border-right-width: 0;
}

/* centred codes are wider than their cell, neighbours cut them off */
.code {
    display: flex;
    justify-content: center;
    margin-right: -1px;
    clip-path: inset(0);
}

.spill-right .code {
    margin-right: 0;
    clip-path: inset(0 -40px 0 0);
}

.spill-left .code {
    clip-path: inset(0 0 0 -40px);
}

.cursor-box {
    position: absolute;
    left: -1px;
    top: -1px;
    right: -2px;
    bottom: -2px;
    border: 2px solid #217346;
    z-index: 1;
}

.cursor-box::after {
    content: "";
    position: absolute;
    right: -3px;
    bottom: -3px;
    width: 5px;
    height: 5px;
    background: #217346;
    outline: 1px solid #fff;
}

.v-scroll {
    display: flex;
    flex-direction: column;
    width: 20px;
    padding: 0 2px 0 1px;
    background: #f1f1f1;
}

.v-scroll button, .h-scroll button, .thumb {
    display: flex;
    align-items: center;
    justify-content: center;
    flex: none;
    width: 17px;
    height: 17px;
    background: #fff;
    border: 1px solid #ababab;
}

.v-scroll button:last-child {
    margin-top: auto;
}

/* sheet tabs */
.sheet-tabs {
    display: flex;
    align-items: stretch;
    height: 26px;
    border-top: 1px solid #ababab;
}

.sheet-nav {
    display: flex;
    align-items: center;
    gap: 21px;
    width: 89px;
    padding-left: 21px;
}

.sheet-tab {
    margin-bottom: 2px;
    padding: 0 11px;
    border-right: 1px solid #ababab;
    color: #555;
    font-size: 13px;
}

.sheet-tab.active {
    margin-top: -1px;
    padding: 1px 7px 0;
    background: #fff;
    border-bottom: 2px solid #217346;
    color: #217346;
    font-weight: 700;
}

.add-sheet {
    margin-left: 31px;
}

.h-scroll {
    display: flex;
    align-items: center;
    width: calc(40% + 17px);
    margin-left: auto;
    padding-right: 19px;
}

.h-scroll .thumb {
    flex: 1;
    margin-right: 14px;
}

/* status bar */
.status-bar {
    display: flex;
    align-items: center;
    height: 23px;
    padding-left: 11px;
    background: #f3f3f3;
    border-top: 1px solid #d0d0d0;
    border-bottom: 1px solid #ababab;
    font-size: 11px;
}

.ready {
    width: 47px;
}

.accessibility {
    display: flex;
    align-items: center;
    gap: 2px;
    margin-left: 19px;
    font-weight: 600;
}

.views {
    display: flex;
    align-self: stretch;
    margin-left: auto;
    margin-right: 5px;
}

.views button {
    display: flex;
    align-items: center;
    justify-content: center;
    width: 40px;
}

.views .on {
    background: #c6c6c6;
}

.zoom {
    appearance: none;
    width: 99px;
    height: 13px;
    margin: 0 6px;
    background: linear-gradient(#333, #333) center / 100% 1px no-repeat;
}

.zoom::-webkit-slider-thumb {
    appearance: none;
    width: 5px;
    height: 12px;
    background: #444;
}

.zoom-value {
    width: 46px;
    padding-right: 8px;
    text-align: right;
}

/* taskbar */
.taskbar {
    display: flex;
    align-items: center;
    height: 47px;
    padding-bottom: 1px;
    background: linear-gradient(90deg, #d9dce0, #efe4d4 19%, #eedfd9 28%, #dcdfe3 38%, #e2e4cf 49%, #dfe3e6 68%, #e2e1ec 84%, #e2e3dc);
}

.weather {
    flex: 0 0 24%;
    display: flex;
    align-items: center;
    gap: 6px;
    padding-left: 18px;
    text-align: left;
}

.weather .temp, .weather .sky {
    display: block;
    line-height: 16px;
}

.weather .sky {
    color: #666;
}

.apps {
    display: flex;
    align-items: center;
}

.app {
    position: relative;
    display: flex;
    align-items: center;
    justify-content: center;
    width: 44px;
    height: 42px;
}

.app::before {
    content: "";
    position: absolute;
    inset: 1px 3px;
    border-radius: 4px;
    z-index: 0;
}

.app > svg {
    position: relative;
}

.app.running::after, .app.current::after, .app.alert::after {
    content: "";
    position: absolute;
    left: 19px;
    bottom: 1px;
    width: 6px;
    height: 3px;
    border-radius: 2px;
    background: #808080;
}

.app.open::before {
    background: #f4f4f1;
    box-shadow: 2px 0 0 #dcdcd6, 3px 0 0 #f4f4f1;
}

.app.current::before {
    background: #f5f7f8;
}

.app.current::after {
    left: 14px;
    width: 16px;
    background: #c0084f;
}

.app.alert::before {
    background: #e6aca8;
}

.app.alert::after {
    left: 6px;
    width: 32px;
    background: #c42b1c;
}

.app .profile {
    position: absolute;
    left: 22px;
    top: 4px;
}

.app .cursor {
    position: absolute;
    left: 16px;
    top: 20px;
    z-index: 2;
}

.badge {
    position: absolute;
    left: 22px;
    top: 5px;
    width: 15px;
    height: 15px;
    border-radius: 50%;
    background: #dd4a4a;
    color: #fff;
    font-size: 9px;
    line-height: 15px;
}

.x {
    font-size: 9px;
    font-weight: 700;
    fill: #fff;
}

.search {
    display: flex;
    align-items: center;
    gap: 10px;
    width: 217px;
    height: 31px;
    margin: 0 4px;
    padding: 0 1px 0 11px;
    border: 1px solid #d2cdca;
    border-radius: 16px;
    background: #f6f4f3;
}

.search input {
    flex: 1;
    min-width: 0;
    font-size: 13px;
}

.search input::placeholder {
    color: #666;
}

.tray {
    display: flex;
    align-items: center;
    gap: 18px;
    margin-left: auto;
    padding-right: 20px;
}

.net {
    display: flex;
    align-items: center;
    gap: 8px;
}

.clock {
    display: flex;
    flex-direction: column;
    margin: 0 -10px 0 -3px;
    text-align: right;
    line-height: 16px;
    color: #222;
}
```
FILE: script.js
```js
const letters = [];
for (let i = 0; i < 36; i++) {
    letters.push((i < 26 ? '' : 'A') + String.fromCharCode(65 + i % 26));
}

const days = Array.from({ length: 31 }, (_, i) => i + 1);

const employees = [
    { id: 'EMP006', name: 'Azzam Maulana', role: 'Lead Programmer', first: 0, off: [] },
    { id: 'EMP003', name: 'Dean Putri Firza', role: 'Human Resource', first: 2, off: [6, 7, 12, 13] }
];

// columns
const named = { A: 'col-a', B: 'col-b', C: 'col-c', AI: 'col-ai', AJ: 'col-aj' };
document.getElementById('cols').innerHTML = '<col class="col-head">' +
    letters.map(l => `<col class="${named[l] || 'col-day'}">`).join('');

document.getElementById('letters').innerHTML = '<th class="corner"></th>' +
    letters.map(l => `<th${l === 'B' ? ' class="selected"' : ''}>${l}</th>`).join('');

function row(n, cells) {
    const size = n > 5 ? 'line' : '';
    return `<tr class="row-${n} ${size}"><th class="num">${n}</th>${cells}<td></td><td class="edge"></td></tr>`;
}

function shiftCell(emp, day) {
    if (emp.off.includes(day)) {
        const joined = emp.off.includes(day + 1) ? '' : ' joined';
        return `<td class="cell${joined}"></td>`;
    }
    let spill = '';
    if (day === 31) spill = ' spill-right joined';
    else if (emp.off.includes(day + 1)) spill = ' spill-right joined';
    else if (emp.off.includes(day - 1)) spill = ' spill-left';
    const code = 'JKR251200' + String(day - 1 + emp.first).padStart(2, '0');
    return `<td class="cell${spill}"><div class="code">${code}</div></td>`;
}

let html = '';
html += row(1, '<td class="title" colspan="34">Bulk Jadwal Shift</td>');
html += row(2, '<td class="subtitle" colspan="34">Landa Pro</td>');
html += row(3, '<td colspan="34"></td>');
html += row(4, '<td class="note" colspan="34">*Isikan kode data jadwal shift karyawan sesuai dengan referensi di tab master shift</td>');
html += row(5, '<td class="note" colspan="34">*Ganti bulan dan tahun pada tabel di bawah jika ingin mengimport bulan yang lain</td>');
html += row(6, '<td class="head" colspan="3">Karyawan</td><td class="head" colspan="31">March 2026</td>');
html += row(7, '<td class="head left">ID</td><td class="head left">Nama</td><td class="head">Jabatan</td>' +
    days.map(d => `<td class="head">${d}</td>`).join(''));

employees.forEach((emp, i) => {
    html += row(8 + i, `<td class="cell text">${emp.id}</td><td class="cell text">${emp.name}</td>` +
        `<td class="cell"><div class="code">${emp.role}</div></td>` +
        days.map(d => shiftCell(emp, d)).join(''));
});

for (let n = 10; n <= 15; n++) {
    html += row(n, letters.slice(0, 34).map(l =>
        `<td class="cell">${n === 12 && l === 'B' ? '<div class="cursor-box"></div>' : ''}</td>`).join(''));
}

document.getElementById('rows').innerHTML = html;
```
